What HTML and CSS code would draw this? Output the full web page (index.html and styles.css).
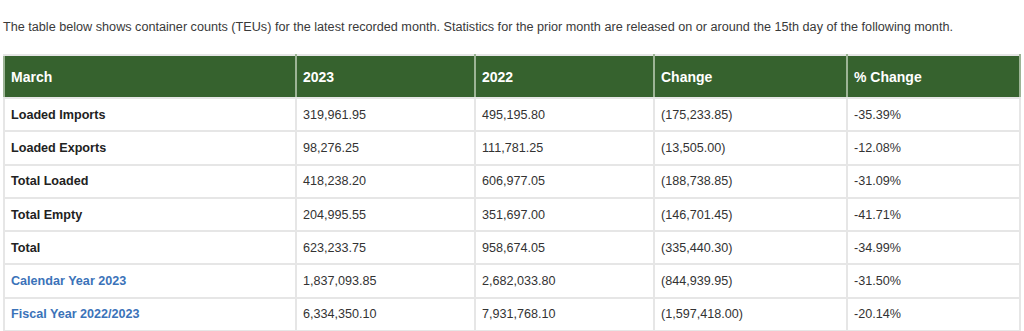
FILE: index.html
```html
<!DOCTYPE html>
<html lang="en">
<head>
  <meta charset="UTF-8" />
  <title>Container Statistics</title>
  <link rel="stylesheet" href="styles.css">
</head>
<body>
  <p class="intro">The table below shows container counts (TEUs) for the latest recorded month. Statistics for the prior month are released on or around the 15th day of the following month.</p>

  <table class="teu-table">
    <colgroup>
      <col class="col-label">
      <col class="col-year">
      <col class="col-year">
      <col class="col-change">
      <col>
    </colgroup>
    <thead>
      <tr>
        <th>March</th>
        <th>2023</th>
        <th>2022</th>
        <th>Change</th>
        <th>% Change</th>
      </tr>
    </thead>
    <tbody>
      <tr>
        <td class="row-label">Loaded Imports</td>
        <td>319,961.95</td>
        <td>495,195.80</td>
        <td>(175,233.85)</td>
        <td>-35.39%</td>
      </tr>
      <tr>
        <td class="row-label">Loaded Exports</td>
        <td>98,276.25</td>
        <td>111,781.25</td>
        <td>(13,505.00)</td>
        <td>-12.08%</td>
      </tr>
      <tr>
        <td class="row-label">Total Loaded</td>
        <td>418,238.20</td>
        <td>606,977.05</td>
        <td>(188,738.85)</td>
        <td>-31.09%</td>
      </tr>
      <tr>
        <td class="row-label">Total Empty</td>
        <td>204,995.55</td>
        <td>351,697.00</td>
        <td>(146,701.45)</td>
        <td>-41.71%</td>
      </tr>
      <tr>
        <td class="row-label">Total</td>
        <td>623,233.75</td>
        <td>958,674.05</td>
        <td>(335,440.30)</td>
        <td>-34.99%</td>
      </tr>
      <tr>
        <td class="row-label"><a href="#">Calendar Year 2023</a></td>
        <td>1,837,093.85</td>
        <td>2,682,033.80</td>
        <td>(844,939.95)</td>
        <td>-31.50%</td>
      </tr>
      <tr>
        <td class="row-label"><a href="#">Fiscal Year 2022/2023</a></td>
        <td>6,334,350.10</td>
        <td>7,931,768.10</td>
        <td>(1,597,418.00)</td>
        <td>-20.14%</td>
      </tr>
    </tbody>
  </table>
</body>
</html>
```

FILE: styles.css
```css
body {
  margin: 0;
  padding: 0 3px;
  font-family: 'Liberation Sans', Arial, sans-serif;
  color: #333333;
  background: #ffffff;
}

.intro {
  margin: 0;
  padding-top: 19px;
  height: 35px;
  font-size: 12.65px;
  line-height: 16px;
  color: #3a3a3a;
}

.teu-table {
  width: 1018px;
  border-collapse: collapse;
  table-layout: fixed;
  font-size: 12.6px;
}

.col-label { width: 292px; }
.col-year { width: 179px; }
.col-change { width: 193px; }

.teu-table th {
  background-color: #36622e;
  color: #ffffff;
  font-size: 14px;
  font-weight: 700;
  text-align: left;
  height: 43px;
  padding: 0 6px;
  box-sizing: border-box;
  border: 2px solid #e6e6e6;
  border-left-color: #9db496;
  border-right-color: #9db496;
}

.teu-table td {
  height: 33.3px;
  padding: 0 6px;
  box-sizing: border-box;
  border: 2px solid #e6e6e6;
}

.row-label {
  font-weight: 700;
  color: #222222;
}

.row-label a {
  color: #3b73b9;
  text-decoration: none;
}
```
